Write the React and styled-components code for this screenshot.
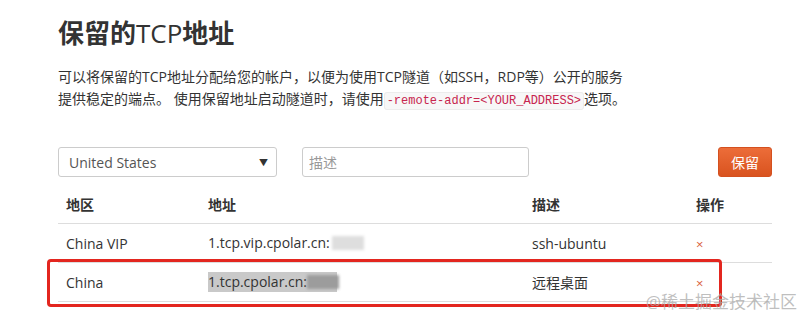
import React from 'react'
import styled, { createGlobalStyle } from 'styled-components'

const GlobalStyle = createGlobalStyle`
    body{
        margin:0;
        background:#fff;
        font-family:"Open Sans","Noto Sans CJK SC",sans-serif;
        color:#333;
    }
`

const rows = [
    { region: 'China VIP', host: '1.tcp.vip.cpolar.cn:', desc: 'ssh-ubuntu' },
    { region: 'China', host: '1.tcp.cpolar.cn:', desc: '远程桌面', marked: true },
]

const App = () => {
    return (
        <Page>
            <GlobalStyle />
            <Title>保留的<Latin>TCP</Latin>地址</Title>
            <Intro>
                可以将保留的TCP地址分配给您的帐户，以便为使用TCP隧道（如SSH，RDP等）公开的服务
                <br />
                提供稳定的端点。 使用保留地址启动隧道时，请使用<Code>-remote-addr=&lt;YOUR_ADDRESS&gt;</Code>选项。
            </Intro>
            <Form>
                <Select>
                    <span>United States</span>
                    <Caret>▼</Caret>
                </Select>
                <Input placeholder="描述" />
                <Button>保留</Button>
            </Form>
            <Table>
                <Head>
                    <Cell>地区</Cell>
                    <Cell>地址</Cell>
                    <Cell>描述</Cell>
                    <Cell>操作</Cell>
                </Head>
                {rows.map(r => (
                    <Row key={r.region}>
                        <Cell>{r.region}</Cell>
                        <Cell>
                            <Host $marked={r.marked}>
                                {r.host}
                                <Blur $dark={r.marked} />
                            </Host>
                        </Cell>
                        <Cell>{r.desc}</Cell>
                        <Cell><Remove>×</Remove></Cell>
                        {r.marked && <Mark />}
                    </Row>
                ))}
            </Table>
            <Watermark>@稀土掘金技术社区</Watermark>
        </Page>
    )
}

export default App

const Page = styled.div`
    position:relative;
    width:810px;
    height:320px;
    box-sizing:border-box;
    padding:18px 38px 0 58px;
    overflow:hidden;
`
const Title = styled.h1`
    margin:0;
    font-size:26px;
    line-height:31px;
    font-weight:700;
    color:#333;
`
const Latin = styled.span`
    font-weight:400;
`
const Intro = styled.p`
    margin:17px 0 0;
    font-size:14px;
    line-height:22px;
    color:#333;
`
const Code = styled.code`
    font-family:"Liberation Mono",monospace;
    font-size:12px;
    color:#c7254e;
    background:#f7f7f7;
    border:1px solid #ececec;
    border-radius:3px;
    padding:1px 2px;
`
const Form = styled.div`
    display:flex;
    align-items:center;
    margin-top:35px;
    height:30px;
`
const Select = styled.div`
    width:219px;
    height:30px;
    box-sizing:border-box;
    border:1px solid #ccc;
    border-radius:3px;
    display:flex;
    align-items:center;
    justify-content:space-between;
    padding:0 8px 0 10px;
    font-size:14px;
    color:#555;
`
const Caret = styled.span`
    font-size:9px;
    color:#333;
`
const Input = styled.input`
    margin-left:25px;
    width:227px;
    height:30px;
    box-sizing:border-box;
    border:1px solid #ccc;
    border-radius:3px;
    padding:0 6px;
    font-family:inherit;
    font-size:14px;
    &::placeholder{ color:#999; }
`
const Button = styled.button`
    margin-left:auto;
    width:54px;
    height:30px;
    border:1px solid #d4501f;
    border-radius:3px;
    background:linear-gradient(#ec6d39,#d9531f);
    color:#fff;
    font-family:inherit;
    font-size:14px;
    padding:0;
`
const Table = styled.div`
    margin-top:8px;
    width:714px;
`
const Head = styled.div`
    display:grid;
    grid-template-columns:142px 324px 164px 84px;
    height:38px;
    align-items:center;
    border-bottom:1px solid #ddd;
    font-weight:700;
    font-size:14px;
`
const Row = styled(Head)`
    position:relative;
    font-weight:400;
    color:#333;
`
const Cell = styled.div`
    padding:0 8px;
    white-space:nowrap;
`
const Host = styled.span`
    position:relative;
    display:inline-block;
    padding-right:36px;
    line-height:20px;
    background:${p => p.$marked ? 'linear-gradient(90deg,#c9c9c9 calc(100% - 6px),transparent calc(100% - 6px))' : 'transparent'};
`
const Blur = styled.span`
    position:absolute;
    right:${p => p.$dark ? '4px' : '2px'};
    top:3px;
    width:32px;
    height:14px;
    background:${p => p.$dark ? '#9c9c9c' : '#dedede'};
    filter:blur(1.5px);
`
const Remove = styled.span`
    color:#d9603b;
    font-size:13px;
    line-height:16px;
`
const Mark = styled.div`
    position:absolute;
    left:-11px;
    top:-4px;
    width:675px;
    height:48px;
    box-sizing:border-box;
    border:3px solid #e3261f;
    border-radius:4px;
`
const Watermark = styled.div`
    position:absolute;
    right:13px;
    bottom:8px;
    font-size:17px;
    line-height:20px;
    color:rgba(170,170,170,0.75);
`
